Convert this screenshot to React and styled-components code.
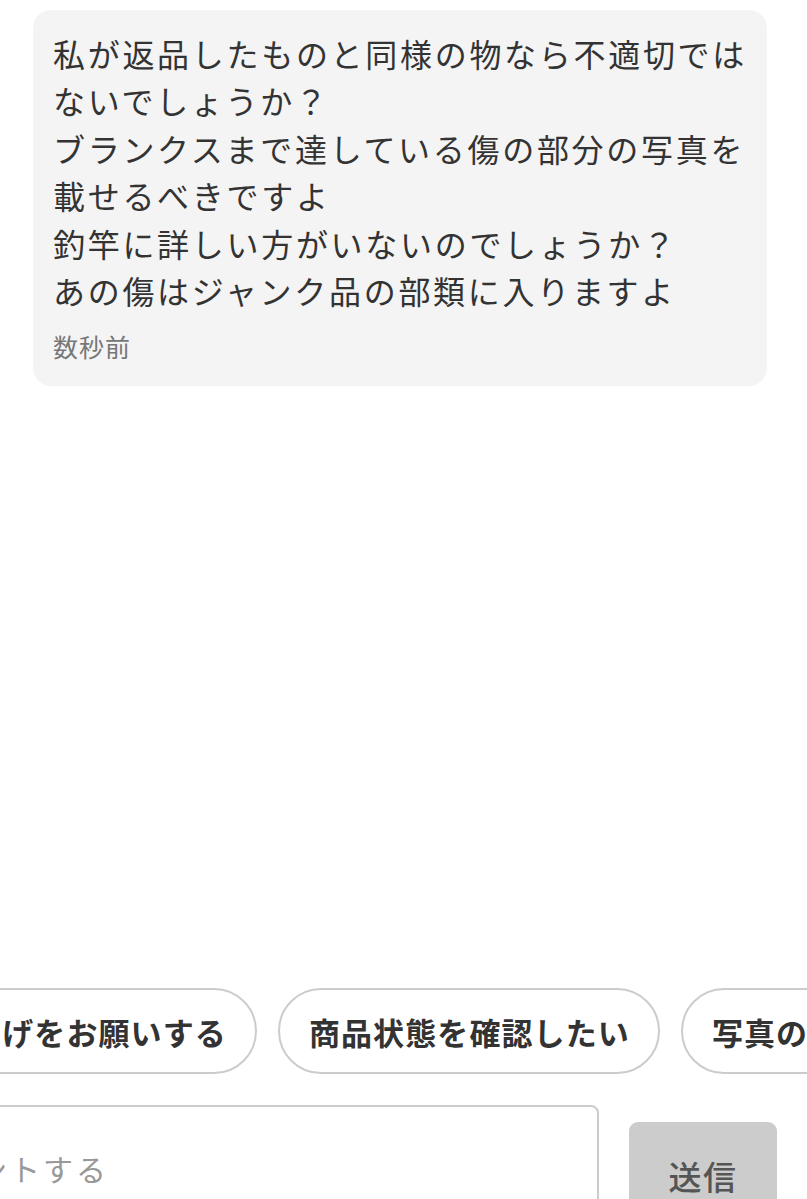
import React from "react";
import styled, { createGlobalStyle } from "styled-components";

const GlobalStyle = createGlobalStyle`
  html, body {
    margin: 0;
    padding: 0;
    background: #ffffff;
    overflow: hidden;
  }
  body {
    font-family: "Noto Sans CJK JP", "Noto Sans", sans-serif;
    color: #333333;
  }
`;

const lines = [
  "私が返品したものと同様の物なら不適切では",
  "ないでしょうか？",
  "ブランクスまで達している傷の部分の写真を",
  "載せるべきですよ",
  "釣竿に詳しい方がいないのでしょうか？",
  "あの傷はジャンク品の部類に入りますよ",
];

const chips = ["値下げをお願いする", "商品状態を確認したい", "写真の追加をお願いする"];

const App = () => {
  return (
    <React.Fragment>
      <GlobalStyle />
      <Page>
        <MessageArea>
          <Bubble>
            <MessageText>
              {lines.map((line, i) => (
                <Line key={i}>{line}</Line>
              ))}
            </MessageText>
            <Time>数秒前</Time>
          </Bubble>
        </MessageArea>
        <Composer>
          <ChipTrack>
            {chips.map((chip) => (
              <Chip key={chip}>{chip}</Chip>
            ))}
          </ChipTrack>
          <InputRow>
            <CommentBox placeholder="コメントする" />
            <SendButton>送信</SendButton>
          </InputRow>
        </Composer>
      </Page>
    </React.Fragment>
  );
};

const Page = styled.div`
  width: 807px;
  height: 100vh;
  display: flex;
  flex-direction: column;
  overflow: hidden;
`;

const MessageArea = styled.div`
  flex: 0 0 988px;
  padding: 10px 40px 0 33px;
  box-sizing: border-box;
`;

const Bubble = styled.div`
  background: #f4f4f4;
  border-radius: 18px;
  padding: 20px 20px 24px 20px;
  width: 734px;
  box-sizing: border-box;
`;

const MessageText = styled.div`
  font-size: 32px;
  line-height: 47.4px;
  letter-spacing: 2.7px;
  color: #333333;
`;

const Line = styled.div`
  white-space: nowrap;
`;

const Time = styled.div`
  margin-top: 16px;
  font-size: 25px;
  line-height: 32px;
  letter-spacing: 1px;
  color: #777777;
`;

const Composer = styled.div`
  display: flex;
  flex-direction: column;
  gap: 31px;
`;

const ChipTrack = styled.div`
  display: flex;
  gap: 21px;
  margin-left: -93px;
  white-space: nowrap;
`;

const Chip = styled.div`
  flex: none;
  height: 86px;
  box-sizing: border-box;
  border: 2px solid #cccccc;
  border-radius: 43px;
  padding: 0 28px 0 29px;
  display: flex;
  align-items: center;
  font-size: 31px;
  font-weight: 700;
  letter-spacing: 1.1px;
  color: #333333;
  background: #ffffff;
`;

const InputRow = styled.div`
  display: flex;
  align-items: flex-start;
  gap: 30px;
  margin-left: -111px;
`;

const CommentBox = styled.textarea`
  width: 710px;
  height: 150px;
  box-sizing: border-box;
  border: 2px solid #cccccc;
  border-radius: 8px;
  padding: 41px 20px 0 20px;
  font-family: "Noto Sans CJK JP", "Noto Sans", sans-serif;
  font-size: 30px;
  line-height: 40px;
  letter-spacing: 3px;
  resize: none;
  outline: none;
  color: #333333;

  &::placeholder {
    color: #999999;
  }
`;

const SendButton = styled.button`
  margin-top: 17px;
  width: 148px;
  height: 110px;
  border: none;
  border-radius: 9px;
  background: #cccccc;
  color: #555555;
  font-family: "Noto Sans CJK JP", "Noto Sans", sans-serif;
  font-size: 33px;
  font-weight: 500;
  letter-spacing: 1.5px;
  line-height: 40px;
  padding: 34px 0 0 0;
  display: flex;
  justify-content: center;
  align-items: flex-start;
`;

export default App;
